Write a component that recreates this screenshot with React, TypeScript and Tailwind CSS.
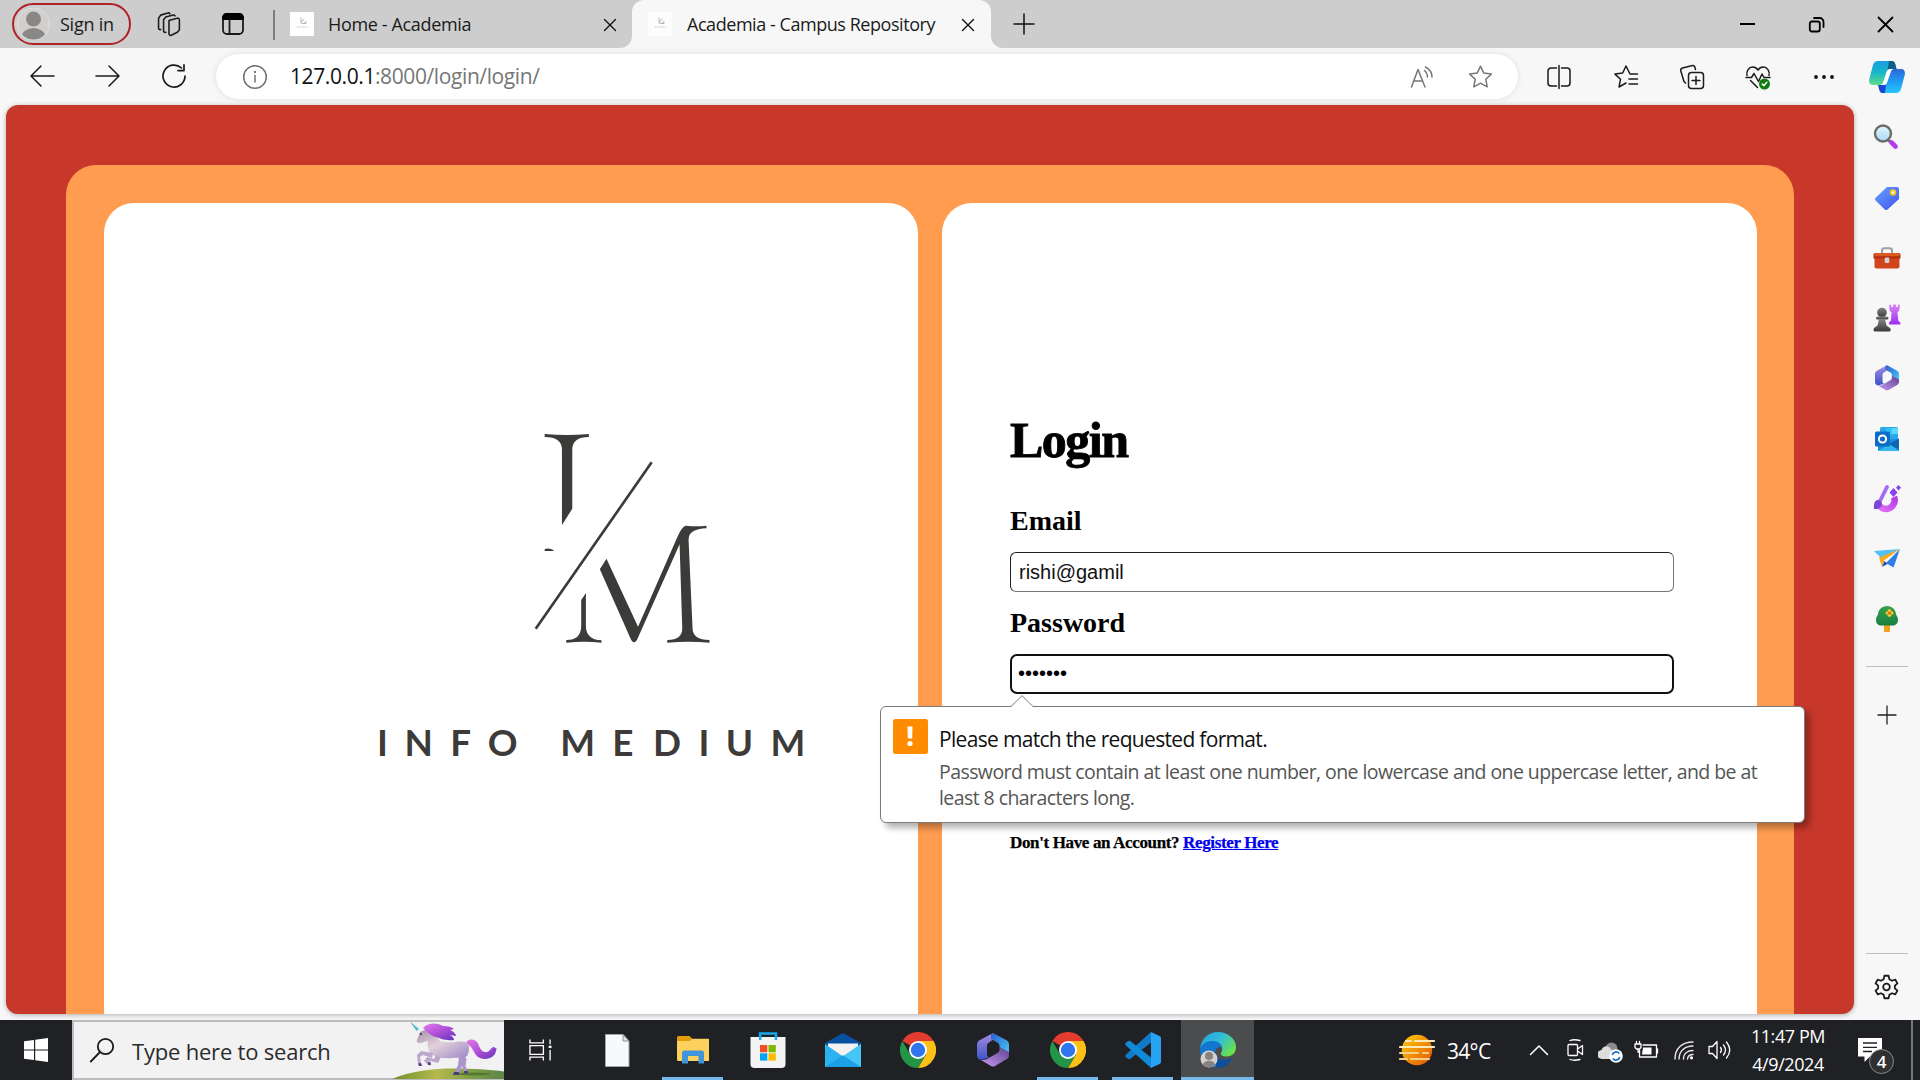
import React from 'react';

type IconProps = {
  w?: number;
  h?: number;
  vb?: string;
  stroke?: string;
  sw?: number;
  className?: string;
  children: React.ReactNode;
};

function Icon({ w = 24, h = 24, vb = '0 0 24 24', stroke = '#1b1b1b', sw = 1.5, className = '', children }: IconProps) {
  return (
    <svg
      width={w}
      height={h}
      viewBox={vb}
      fill="none"
      stroke={stroke}
      strokeWidth={sw}
      strokeLinecap="round"
      strokeLinejoin="round"
      className={`block shrink-0 overflow-visible ${className}`}
    >
      {children}
    </svg>
  );
}

function Slot({ className, children }: { className: string; children?: React.ReactNode }) {
  return <div className={`flex shrink-0 items-center justify-center ${className}`}>{children}</div>;
}

/* ---------- browser tab strip ---------- */

function Favicon({ bg }: { bg: string }) {
  return (
    <div className={`h-6 w-6 shrink-0 ${bg}`}>
      <Icon stroke="#b5b5b5" sw={1}>
        <path d="M11 6v4M11 11l3-4M12 11.500h4v-2l-2 2" />
        <path d="M7 15h11" stroke="#d4d4d4" strokeWidth={1.5} strokeDasharray="1.500 1" strokeLinecap="butt" />
      </Icon>
    </div>
  );
}

function CloseX({ size }: { size: number }) {
  return (
    <Icon w={size} h={size} vb="0 0 12 12" sw={1.4} stroke="#111">
      <path d="M.5.5l11 11M11.500.5l-11 11" />
    </Icon>
  );
}

function TabStrip() {
  return (
    <div className="flex h-12 w-full bg-[#cdcdcd]">
      <div className="ml-3 mt-[3px] flex h-[42px] w-[119px] shrink-0 items-center rounded-full border-2 border-[#ad2227] pl-[3px]">
        <svg width="33" height="34" viewBox="0 0 33 34" className="block">
          <defs>
            <clipPath id="avatar">
              <circle cx="16.500" cy="17" r="15.500" />
            </clipPath>
          </defs>
          <circle cx="16.500" cy="17" r="16" fill="#d2d0ce" stroke="#e2e0de" />
          <g clipPath="url(#avatar)" fill="#8a8886">
            <circle cx="16.500" cy="12" r="7.500" />
            <ellipse cx="16.500" cy="30" rx="12" ry="9" />
          </g>
        </svg>
        <span className="ml-[10px] text-[18px] tracking-[-0.25px] whitespace-nowrap text-[#1b1b1b]">Sign in</span>
      </div>
      <Slot className="ml-[26px] w-6">
        <Icon w={25} h={25}>
          <path d="M11.500 8.200l7.800-2.200a1.600 1.600 0 0 1 2.200 1.500v9.500l-2 2.500-5.800 2.800a1.500 1.500 0 0 1-2.200-1.400z" />
          <path d="M8.500 19.500A1.500 1.500 0 0 1 6.300 18V7.500l2-2.600 7.300-2a1.500 1.500 0 0 1 1.700.8" />
          <path d="M3.500 16.800A1.500 1.500 0 0 1 1.500 15.300V6l2-3 7-2a1.500 1.500 0 0 1 1.900.7" />
        </Icon>
      </Slot>
      <Slot className="ml-[41px] w-[22px]">
        <Icon w={22} h={22} vb="0 0 22 22" sw={1.800}>
          <rect x="1" y="1" width="20" height="20" rx="4" />
          <path d="M1 6V4.500A3.500 3.500 0 0 1 4.500 1h13A3.500 3.500 0 0 1 21 4.500V6z" fill="#000" stroke="#000" />
          <path d="M7.500 7v14" />
        </Icon>
      </Slot>
      <div className="ml-[29px] mt-[10px] h-[30px] w-[2px] bg-[#7d7d7d]" />
      <div className="ml-[15px] flex w-[342px] items-center">
        <Favicon bg="bg-white" />
        <span className="ml-[14px] flex-1 text-[18px] tracking-[-0.35px] whitespace-nowrap text-[#1b1b1b]">Home - Academia</span>
        <div className="mt-[2px] mr-[16px]">
          <CloseX size={12} />
        </div>
      </div>
      <div className="relative flex w-[359px] items-center rounded-t-[12px] bg-[#f7f7f7] pl-4">
        <svg width="12" height="12" viewBox="0 0 12 12" className="absolute bottom-0 -left-3" fill="#f7f7f7">
          <path d="M12 0v12H0A12 12 0 0 0 12 0z" />
        </svg>
        <svg width="12" height="12" viewBox="0 0 12 12" className="absolute -right-3 bottom-0" fill="#f7f7f7">
          <path d="M0 0v12h12A12 12 0 0 1 0 0z" />
        </svg>
        <Favicon bg="bg-[#fdfdfd]" />
        <span className="ml-[15px] flex-1 text-[18px] tracking-[-0.45px] whitespace-nowrap text-[#1b1b1b]">
          Academia - Campus Repository
        </span>
        <div className="mt-[2px] mr-[17px]">
          <CloseX size={12} />
        </div>
      </div>
      <Slot className="ml-[22px] w-[22px]">
        <Icon w={20} h={20} vb="0 0 20 20" sw={1.5} stroke="#111">
          <path d="M10 0v20M0 10h20" />
        </Icon>
      </Slot>
      <div className="flex-1" />
      <Slot className="w-[69px]">
        <Icon w={15} h={2} vb="0 0 15 2" sw={2} stroke="#000">
          <path d="M0 1h15" strokeLinecap="butt" />
        </Icon>
      </Slot>
      <Slot className="w-[69px]">
        <Icon w={15} h={15} vb="0 0 15 15" sw={1.800} stroke="#000">
          <rect x=".8" y="4.500" width="10" height="10" rx="2" />
          <path d="M5 1h5.500a4 4 0 0 1 4 4v5" />
        </Icon>
      </Slot>
      <Slot className="w-[69px]">
        <Icon w={15} h={15} vb="0 0 15 15" sw={1.800} stroke="#000">
          <path d="M.5.5l14 14M14.500.5l-14 14" />
        </Icon>
      </Slot>
    </div>
  );
}

/* ---------- address bar ---------- */

const STAR =
  'M12 1.200l3.300 6.900 7.500 1-5.500 5.200 1.400 7.500L12 18.200l-6.700 3.600 1.400-7.500L1.200 9.100l7.500-1z';

function CopilotLogo() {
  return (
    <svg width="36" height="32" viewBox="0 0 36 32" className="block">
      <defs>
        <linearGradient id="cpA" x1="0" y1="0" x2="0" y2="1">
          <stop offset="0" stopColor="#1b9de2" />
          <stop offset=".5" stopColor="#18b7c9" />
          <stop offset="1" stopColor="#62dd8a" />
        </linearGradient>
        <linearGradient id="cpB" x1="0" y1="0" x2="0" y2="1">
          <stop offset="0" stopColor="#2f68d8" />
          <stop offset=".6" stopColor="#1da3f5" />
          <stop offset="1" stopColor="#28c6f8" />
        </linearGradient>
      </defs>
      <path d="M9 0h14c2 0 3 2 3.500 4l1 4h-6c-2 0-3 1-3.600 3L14 22c-.6 1.500-1.500 2-3 2H4c-3.500 0-4.500-3-3.700-6L4 4c.8-2.500 2.500-4 5-4z" fill="url(#cpA)" />
      <path d="M20 0h3c2 0 3 2 3.500 4l1 4h-6c-1.500 0-2.500.5-3 2z" fill="#0c6087" />
      <path d="M27 32H14c-2 0-3-2-3.500-4l-1-4h5c2 0 3-1 3.600-3L22 10c.6-1.500 1.500-2 3-2h7c3.500 0 4.500 3 3.700 6L32 28c-.8 2.500-2.500 4-5 4z" fill="url(#cpB)" />
      <path d="M16 32h-3c-1.500 0-2.500-2-3-4l-1-4h6c1 0 1.500-.3 2-1z" fill="#1b48cf" />
      <path d="M17.700 10.500c.5-1.500 1.700-2.500 3.300-2.500h4c-1.500 0-2.500.8-3 2l-4.200 12c-.5 1.300-1.500 2-3.300 2h-3c1.300 0 2-.7 2.500-2z" fill="#fff" />
    </svg>
  );
}

function AddressBar() {
  return (
    <div className="flex h-[57px] w-full bg-[#f7f7f7] pl-[9px]">
      <Slot className="h-14 w-[66px]">
        <Icon w={24} h={22} vb="0 0 24 22">
          <path d="M24 11H1M11 1L1 11l10 10" />
        </Icon>
      </Slot>
      <Slot className="h-14 w-[66px]">
        <Icon w={24} h={22} vb="0 0 24 22">
          <path d="M0 11h23M13 1l10 10-10 10" />
        </Icon>
      </Slot>
      <Slot className="h-14 w-[66px]">
        <Icon w={24} h={24} sw={1.700}>
          <path d="M23 12a11 11 0 1 1-3.500-8M22 .8v5.800h-6" />
        </Icon>
      </Slot>
      <div className="mt-[6px] ml-[9px] flex h-[45px] w-[1302px] items-center rounded-full bg-white pl-[27px] shadow-[0_0_6px_rgba(0,0,0,0.1)]">
        <Icon stroke="#717171" sw={1.5}>
          <circle cx="12" cy="12" r="11.300" />
          <path d="M12 10.500V17" />
          <path d="M12 6.800v.4" strokeWidth={2} />
        </Icon>
        <span className="ml-[23px] flex-1 pt-px text-[21px] tracking-[-0.4px] whitespace-nowrap text-[#767676]">
          <span className="text-[#111]">127.0.0.1</span>:8000/login/login/
        </span>
        <Slot className="w-[59px]">
          <Icon w={24} h={22} vb="0 0 24 22" stroke="#767676">
            <path d="M1.500 21L8 3.500 15 21M4 15h8.500" />
            <path d="M14.500 4.500q3 2.500 3 6.500M15.500 1q6.500 3.500 6.500 10" strokeWidth={1.500} />
          </Icon>
        </Slot>
        <Slot className="mr-2 w-[59px]">
          <Icon w={25} h={24} stroke="#767676">
            <path d={STAR} />
          </Icon>
        </Slot>
      </div>
      <Slot className="ml-2 h-[57px] w-[66px]">
        <Icon>
          <path d="M9.500 3H4a3 3 0 0 0-3 3v12a3 3 0 0 0 3 3h5.500M14.500 3H20a3 3 0 0 1 3 3v12a3 3 0 0 1-3 3h-5.500M12 .5v23" />
        </Icon>
      </Slot>
      <Slot className="ml-px h-[57px] w-[66px]">
        <Icon>
          <path d="M23.500 9H16l-4-8-3.300 7L1 9.100l5.500 5.200L5 22l7-4M15 14h8.500M15 19h8.500" />
        </Icon>
      </Slot>
      <Slot className="h-[57px] w-[66px]">
        <Icon>
          <rect x="8.500" y="7.500" width="15" height="16" rx="3" />
          <path d="M16 11.500v8M12 15.500h8" />
          <path d="M5.500 18L4 16.500.800 6A2.500 2.500 0 0 1 2.500 3L11.500.700A2.500 2.500 0 0 1 15 2.500L15.500 4.500" />
        </Icon>
      </Slot>
      <Slot className="h-[57px] w-[66px]">
        <Icon w={24} h={24}>
          <path d="M1 10.500C0 6 3 2 6.500 2 9 2 11 3.300 12 5c1-1.700 3-3 5.500-3C21 2 24 6 23 10.500" />
          <path d="M0 12.500h5.500L8 8.500l4.500 8L16 9l2 3.500h6M4.500 15.500l7 7" />
          <circle cx="18.500" cy="19" r="5.500" fill="#107c10" stroke="none" />
          <path d="M16.300 19l1.500 1.700 3-3.400" stroke="#fff" />
        </Icon>
      </Slot>
      <Slot className="h-[57px] w-[66px]">
        <Icon w={20} h={4} vb="0 0 20 4" stroke="none">
          <g fill="#111">
            <circle cx="2" cy="2" r="1.900" />
            <circle cx="10" cy="2" r="1.900" />
            <circle cx="18" cy="2" r="1.900" />
          </g>
        </Icon>
      </Slot>
      <Slot className="h-[57px] w-[60px]">
        <CopilotLogo />
      </Slot>
    </div>
  );
}

/* ---------- right sidebar ---------- */

function M365({ w, h }: { w: number; h: number }) {
  return (
    <svg width={w} height={h} viewBox="0 0 32 34" className="block">
      <defs>
        <linearGradient id="mA" x1="0" y1="0" x2="0" y2="1">
          <stop offset="0" stopColor="#a88be0" />
          <stop offset="1" stopColor="#3a55c4" />
        </linearGradient>
        <linearGradient id="mB" x1="0" y1="0" x2="1" y2="1">
          <stop offset="0" stopColor="#2b5fd0" />
          <stop offset="1" stopColor="#4cc8f5" />
        </linearGradient>
        <linearGradient id="mC" x1="0" y1="1" x2="1" y2="0">
          <stop offset="0" stopColor="#c99bf5" />
          <stop offset="1" stopColor="#5c3f8f" />
        </linearGradient>
      </defs>
      <path d="M16 0L3 7C1 8 0 9.500 0 12v10c0 3 1.500 4.500 4 5l8-2.500c-2-1-2-2.500-2-4V13c0-1.500.5-2.500 2-3.500l7-5z" fill="url(#mA)" />
      <path d="M14 1c1.500-.8 2.500-.8 4 0l11 6c2 1 3 2.500 3 5v9l-9.500-7V13c0-1.500-.6-2.500-2-3.500L14 6z" fill="url(#mB)" />
      <path d="M32 19v3c0 2-1 3.500-3 4.500L18 33c-1.500.8-2.500.8-4 0L4 27c2 .3 4 0 6-1l10.500-6c1.500-1 2-2 2-4v-2z" fill="url(#mC)" />
    </svg>
  );
}

function SearchGlass() {
  return (
    <svg width="26" height="26" viewBox="0 0 26 26" className="mb-[2px] mr-px block">
      <defs>
        <linearGradient id="sgL" x1="0" y1="0" x2="0" y2="1">
          <stop offset="0" stopColor="#e4f6fd" />
          <stop offset="1" stopColor="#a9d9f4" />
        </linearGradient>
      </defs>
      <path d="M14.500 15.500l3 2.500" stroke="#777" strokeWidth="3" />
      <path d="M18.500 18.500l4 4" stroke="#b53bf0" strokeWidth="4.600" strokeLinecap="round" />
      <circle cx="10" cy="9.500" r="8" fill="url(#sgL)" stroke="#6b6d68" strokeWidth="2.400" />
    </svg>
  );
}

function Tag() {
  return (
    <svg width="24" height="24" viewBox="0 0 24 24" className="block">
      <defs>
        <linearGradient id="tg" x1="0" y1="0" x2="1" y2="1">
          <stop offset="0" stopColor="#63a4fd" />
          <stop offset="1" stopColor="#4152ee" />
        </linearGradient>
      </defs>
      <path d="M12 1h10a2 2 0 0 1 2 2v10L12.500 23.500a2 2 0 0 1-2.800 0L.6 14.600a2 2 0 0 1 0-2.800z" fill="url(#tg)" />
      <circle cx="18" cy="6.500" r="2.300" fill="#fff" stroke="#f7c51e" strokeWidth="2" />
    </svg>
  );
}

function Toolbox() {
  return (
    <svg width="28" height="22" viewBox="0 0 28 22" className="block">
      <path d="M9 6V3.500C9 2 10 1.200 11.500 1.200h5c1.500 0 2.500.8 2.500 2.300V6" fill="none" stroke="#a09ea3" strokeWidth="2" />
      <rect x="1.500" y="10" width="25" height="11.500" rx="2" fill="#d0451b" />
      <rect x=".5" y="6" width="27" height="6" rx="1.500" fill="#b83614" />
      <rect x="1.500" y="6" width="25" height="3" rx="1" fill="#da5a22" />
      <rect x="11.700" y="10.500" width="4.600" height="5.500" rx="1.200" fill="#d0d0d5" />
    </svg>
  );
}

function Chess() {
  return (
    <svg width="28" height="28" viewBox="0 0 28 28" className="block">
      <defs>
        <linearGradient id="ck" x1="0" y1="0" x2="0" y2="1">
          <stop offset="0" stopColor="#d887f5" />
          <stop offset="1" stopColor="#a02af0" />
        </linearGradient>
        <linearGradient id="cp" x1="0" y1="0" x2="0" y2="1">
          <stop offset="0" stopColor="#858585" />
          <stop offset="1" stopColor="#3a3a3a" />
        </linearGradient>
      </defs>
      <path d="M16 .8h2.200V3h1.800V.5h3V3h1.800V.8H27l-.8 5.700-1.700 2 .8 8 2 2.200v1.800H16v-2l2-2 .5-8-1.800-2z" fill="url(#ck)" />
      <g fill="url(#cp)">
        <circle cx="9" cy="8.500" r="4.800" />
        <rect x="3" y="12.500" width="12.500" height="3" rx="1.500" />
        <path d="M6 15h6l1.500 6.500 3.500 2.500c1.500 2 .5 3.500-1 3.500H2C.5 27.500 0 25.500 1 24l3.500-2.500z" />
      </g>
    </svg>
  );
}

function Outlook() {
  return (
    <svg width="24" height="24" viewBox="0 0 24 24" className="block">
      <rect x="5" y="0" width="18" height="13" rx="1.500" fill="#2aa7ec" />
      <rect x="11" y="1" width="6" height="7" fill="#33c3f3" />
      <rect x="17" y="1" width="6" height="6" fill="#5ad8fa" />
      <path d="M3 12h21v10.500a1.500 1.500 0 0 1-1.500 1.500H4.500A1.500 1.500 0 0 1 3 22.500z" fill="#1a8fdf" />
      <path d="M24 11.500v11L14 17z" fill="#0f66b0" />
      <path d="M3 24l11-7 10 7z" fill="#32b8ee" />
      <rect x="0" y="4.500" width="15" height="15" rx="1.500" fill="#0b6cc7" />
      <circle cx="7.500" cy="12" r="3.600" fill="none" stroke="#fff" strokeWidth="2" />
    </svg>
  );
}

function Designer() {
  return (
    <svg width="28" height="28" viewBox="0 0 28 28" className="block">
      <defs>
        <linearGradient id="dz" x1="0" y1="1" x2="1" y2="0">
          <stop offset="0" stopColor="#e070f5" />
          <stop offset="1" stopColor="#b23be8" />
        </linearGradient>
      </defs>
      <path d="M5 18.500a8.500 8.500 0 1 0 16-6.500" fill="none" stroke="url(#dz)" strokeWidth="6.500" />
      <path d="M14 2L6.500 17" stroke="#a36cf3" strokeWidth="3.800" strokeLinecap="round" />
      <path d="M1 24c-.5-5 .5-9 4-9 3 0 4.500 2.500 3.500 5.500C7.500 23.500 4 24.500 1 24z" fill="#7a46d8" />
      <path d="M20.500 3l4 4.500-4 4.500-4-4.500zM25.500 0l2.500 2.800-2.500 2.700L23 2.800z" fill="#8645ea" />
    </svg>
  );
}

function PaperPlane() {
  return (
    <svg width="26" height="20" viewBox="0 0 26 20" className="block">
      <path d="M0 2L26 0 7 9z" fill="#55c0f6" />
      <path d="M26 0L19.500 18.500 11 13.500 9 17z" fill="#2f7ee8" />
      <path d="M26 0L5 8.500 8 18l2.500-7z" fill="#f2ac24" />
      <path d="M8 18l2.500-6 3 3z" fill="#1b4fb8" />
    </svg>
  );
}

function Tree() {
  return (
    <svg width="22" height="26" viewBox="0 0 22 26" className="block">
      <defs>
        <linearGradient id="tr" x1="0" y1="0" x2="0" y2="1">
          <stop offset="0" stopColor="#38a04f" />
          <stop offset="1" stopColor="#17803f" />
        </linearGradient>
      </defs>
      <rect x="8" y="17" width="6" height="9" rx="1" fill="#f0a21c" />
      <path d="M11 0c5 0 9 4 9 8.500 1.200 1.500 2 3.300 2 5.500 0 3-2 5.500-5 5.500H5c-3 0-5-2.500-5-5.500 0-2.200.8-4 2-5.500C2 4 6 0 11 0z" fill="url(#tr)" />
      <g fill="#f8c828">
        <circle cx="13.500" cy="4.700" r="1.700" />
        <circle cx="13.500" cy="9.300" r="1.700" />
        <circle cx="11.200" cy="7" r="1.700" />
        <circle cx="15.800" cy="7" r="1.700" />
      </g>
      <circle cx="13.500" cy="7" r="1.500" fill="#e06a1a" />
    </svg>
  );
}

function Sidebar() {
  const items = [
    <SearchGlass />,
    <Tag />,
    <Toolbox />,
    <Chess />,
    <M365 w={24} h={26} />,
    <Outlook />,
    <Designer />,
    <PaperPlane />,
    <Tree />,
  ];
  return (
    <div className="flex w-[65px] shrink-0 flex-col items-center bg-[#f7f7f7] pt-[3px]">
      {items.map((it, i) => (
        <Slot key={i} className="h-[60.1px] w-full">
          {it}
        </Slot>
      ))}
      <div className="mt-[17px] h-px w-[42px] bg-[#bdbdbd]" />
      <Slot className="mt-[36px] h-6">
        <Icon w={18} h={18} vb="0 0 18 18" sw={1.3} stroke="#222">
          <path d="M9 0v18M0 9h18" />
        </Icon>
      </Slot>
      <div className="flex-1" />
      <div className="h-px w-[42px] bg-[#bdbdbd]" />
      <Slot className="mt-[20px] mb-[20px] h-[26px]">
        <Icon w={25} h={26} sw={1.700} vb="0 0 24 24">
          <circle cx="12" cy="12" r="3.200" />
          <path d="M10 1.200h4l.7 3.300 2.600 1.500 3.200-1 2 3.500-2.500 2.200v2.600l2.500 2.200-2 3.500-3.200-1-2.600 1.500-.7 3.300h-4l-.7-3.300L6.700 18l-3.200 1-2-3.500L4 13.300v-2.600L1.500 8.500l2-3.500 3.200 1 2.600-1.500z" />
        </Icon>
      </Slot>
    </div>
  );
}

/* ---------- web page ---------- */

function BrandLogo() {
  return (
    <svg width="521" height="370" viewBox="0 0 1568 1110" preserveAspectRatio="none" className="block" fill="#3c3b39">
      <path d="M613 72q67 6 133 0v9q-50 0-50 38V296l-31 49V119q0-38-52-38z" />
      <path d="M613 417q14-5 27 4v2h-27z" />
      <path d="M935 157L586 656" stroke="#3c3b39" strokeWidth="8" fill="none" />
      <path d="M737 549v98q0 42 47 44v7q-52-5-106 0v-8q45 0 45-43v-77z" />
      <path d="M799 446l95 204 118-268q14-34 27-35 30 3 61 0v8q-55 2-54 35l12 264q0 36 51 36v8q-62-5-127 0v-8q46 0 45-36l-8-251-128 286q-9 15-18 0L779 478z" />
      <text
        y="1038"
        x="108 191 329 442 600 660 816 939 1076 1158 1293"
        fontFamily="Lato, sans-serif"
        fontWeight="700"
        fontSize="111"
      >
        INFO MEDIUM
      </text>
    </svg>
  );
}

function ValidationBubble() {
  return (
    <div className="absolute top-[601px] left-[874px] flex h-[117px] w-[925px] rounded-[6px] border border-[#7b7b7b] bg-white shadow-[5px_5px_6px_rgba(0,0,0,0.3)]">
      <svg width="24" height="13" viewBox="0 0 24 13" className="absolute -top-[12px] left-[129px] block">
        <path d="M0 13L1 11.500 12 .700l11 10.800 1 1.500z" fill="#fff" />
        <path d="M.5 12L12 .700 23.500 12" fill="none" stroke="#7b7b7b" />
      </svg>
      <svg width="35" height="35" viewBox="0 0 35 35" className="mt-[12px] ml-[12px] block shrink-0">
        <rect width="35" height="35" rx="2.500" fill="#ff8c00" />
        <path d="M14.500 7.500h5l-.3 12h-4.400z" fill="#fff" />
        <circle cx="17" cy="24.500" r="2.600" fill="#fff" />
      </svg>
      <div className="mt-[18px] ml-[11px] whitespace-nowrap">
        <div className="text-[21px] leading-7 tracking-[-0.68px] text-[#111]">Please match the requested format.</div>
        <div className="mt-[6px] text-[19.5px] leading-[26px] tracking-[-0.57px] text-[#555]">
          Password must contain at least one number, one lowercase and one uppercase letter, and be at
          <br />
          least 8 characters long.
        </div>
      </div>
    </div>
  );
}

function LoginPage() {
  return (
    <div className="relative ml-[6px] h-[909px] w-[1848px] shrink-0 overflow-hidden rounded-[12px] bg-[#c7382b] shadow-[0_1px_5px_rgba(0,0,0,0.3)]">
      <div className="mx-[60px] mt-[60px] flex h-[1000px] gap-6 rounded-[30px] bg-[#ff9c50] py-[38px] pl-[38px]">
        <div className="w-[814px] shrink-0 rounded-[30px] bg-white pt-[207px] pl-[237px]">
          <BrandLogo />
        </div>
        <div className="w-[815px] shrink-0 rounded-[30px] bg-white pt-[207px] pl-[68px] font-['Liberation_Serif',serif] text-black">
          <h1 className="text-[50px] leading-[60px] font-bold tracking-[-1.5px] [-webkit-text-stroke:0.9px_#000]">Login</h1>
          <div className="mt-[35px] text-[28px] leading-8 font-bold">Email</div>
          <div className="mt-[15px] flex h-10 w-[664px] items-center rounded-[6px] border border-[#767676] border-t-[#222] border-l-[#222] pl-2 font-['Liberation_Sans',sans-serif] text-[20px] text-[#111]">
            rishi@gamil
          </div>
          <div className="mt-[15px] text-[28px] leading-8 font-bold">Password</div>
          <div className="mt-[15px] flex h-10 w-[664px] items-center rounded-[7px] border-[2.5px] border-[#101010] pb-[2px] pl-[6px] font-['Liberation_Sans',sans-serif] text-[20px] text-black">
            •••••••
          </div>
          <div className="mt-[139px] text-[17px] leading-5 font-bold tracking-[-0.36px] whitespace-nowrap [-webkit-text-stroke:0.25px]">
            Don't Have an Account? <span className="text-[#0000ee] underline">Register Here</span>
          </div>
        </div>
      </div>
      <ValidationBubble />
    </div>
  );
}

/* ---------- taskbar ---------- */

function Unicorn() {
  return (
    <svg width="112" height="58" viewBox="0 0 112 58" className="block">
      <defs>
        <linearGradient id="uh" x1="0" y1="0" x2="1" y2="1">
          <stop offset="0" stopColor="#a68fae" />
          <stop offset=".45" stopColor="#e2d0da" />
          <stop offset="1" stopColor="#9c88c6" />
        </linearGradient>
        <linearGradient id="um" x1="0" y1="0" x2="1" y2="1">
          <stop offset="0" stopColor="#e07bea" />
          <stop offset=".5" stopColor="#b04fd8" />
          <stop offset="1" stopColor="#5f35b8" />
        </linearGradient>
        <linearGradient id="ug" x1="0" y1="0" x2="1" y2="0">
          <stop offset="0" stopColor="#6f8f2e" />
          <stop offset=".4" stopColor="#b6b94e" />
          <stop offset=".7" stopColor="#7da044" />
          <stop offset="1" stopColor="#5d8547" />
        </linearGradient>
      </defs>
      <path d="M0 58C18 50 42 47.500 60 47.500c20 0 38 1 52 3V58z" fill="url(#ug)" />
      <ellipse cx="80" cy="53" rx="18" ry="1.500" fill="#3f5f25" opacity=".6" />
      <path d="M18 .500L27 8l-2.500 2z" fill="#58b9cc" />
      <path d="M75 20c6-3 10-1 12 5 2 5 6 8 10 5 2-2 3-4 5-4l3 2-1 1c0 7-9 11-16 8-7-3-6-11-13-14z" fill="url(#um)" />
      <path d="M71 33l3.500 5-1 7 2.500 6h-4l-2-6-3 8h-5l4-9 1-8-2-4z" fill="#ab95cc" />
      <path d="M33 9c6 1 11 5 15 11 8 3 19-1 26 1 4 2 4 9 1 14-5 3-9 1-14 2-9 1-17-1-22-4-3-3-4-8-3-13l-7 2c-3 1-5-1-4-3l3-8z" fill="url(#uh)" />
      <path d="M41 32l-12-2-4 4 1 9 3-1-1-6 3-2 9 3zM44 34l-2 4-7-2-3 4 4 4 4 0-3-3 1-1 8 2 3-6z" fill="#bca8cc" />
      <path d="M31 7c6-6 15-5 20-2 5 0 9 1 11 3l-4 1c3 1 6 4 6 6l-6-1c2 1 4 3 4 5-10 1-14-2-18-3-5-1-9-5-13-9z" fill="url(#um)" />
      <path d="M62 51h5v3h-6zM72 50h4v2.500h-4zM26 42.500l3-.5 1 3h-3zM36 41l3 .5-1 3-2-1z" fill="#4b3a7c" />
      <circle cx="29" cy="13" r=".9" fill="#2b1b3f" />
    </svg>
  );
}

function Chrome() {
  return (
    <svg width="36" height="36" viewBox="0 0 36 36" className="block">
      <path d="M18 18L2.400 9A18 18 0 0 1 33.600 9H18z" fill="#e33b2e" />
      <path d="M18 18V9h15.600A18 18 0 0 1 18 36l7.800-13.500z" fill="#fcc016" />
      <path d="M18 18l7.800 4.500L18 36A18 18 0 0 1 2.400 9l7.800 13.500z" fill="#249446" />
      <circle cx="18" cy="18" r="9" fill="#fff" />
      <circle cx="18" cy="18" r="7.200" fill="#2f76ee" />
    </svg>
  );
}

function FileIcon() {
  return (
    <svg width="25" height="33" viewBox="0 0 25 33" className="block">
      <path d="M.5.500h17.500l6 6.500v25.500H.5z" fill="#f7f9fa" stroke="#a5a5a5" />
      <path d="M18 .500V7h6z" fill="#dfe2e4" stroke="#8f8f8f" />
    </svg>
  );
}

function FolderIcon() {
  return (
    <svg width="32" height="28" viewBox="0 0 32 28" className="block">
      <path d="M0 1.500A1.500 1.500 0 0 1 1.500 0h11L15 2.500V7H0z" fill="#e29c06" />
      <path d="M0 5h13l2-2.200h17V25H1.500A1.500 1.500 0 0 1 0 23.500z" fill="#fcd05c" />
      <path d="M5 27.500V17a2.500 2.500 0 0 1 2.500-2.500h17A2.500 2.500 0 0 1 27 17v10.500h-5.500v-7.500H11v7.500z" fill="#3f94dc" />
    </svg>
  );
}

function StoreIcon() {
  return (
    <svg width="36" height="36" viewBox="0 0 36 36" className="block">
      <path d="M10 8V1.500h16V8" fill="none" stroke="#19a7ee" strokeWidth="2.400" />
      <path d="M.5 5h35v27a4 4 0 0 1-4 4h-27a4 4 0 0 1-4-4z" fill="#f4f4f4" />
      <path d="M9 4h2.400v4H9zM24.700 4h2.400v4h-2.400z" fill="#19a7ee" />
      <path d="M10 13h7.300v7.300H10z" fill="#f25022" />
      <path d="M18.500 13h7.300v7.300h-7.300z" fill="#7fba00" />
      <path d="M10 21.300h7.300v7.300H10z" fill="#00a4ef" />
      <path d="M18.500 21.300h7.300v7.300h-7.300z" fill="#ffb900" />
    </svg>
  );
}

function MailIcon() {
  return (
    <svg width="36" height="34" viewBox="0 0 36 34" className="block">
      <path d="M0 10L18 0l18 10v4H0z" fill="#0a50a0" />
      <path d="M3 10.500h30V20L18 28 3 20z" fill="#f2f2f2" />
      <path d="M0 11l18 12.500L36 11v23H0z" fill="#2ab3ef" />
      <path d="M18 23.500L36 11v23z" fill="#45c6f6" />
      <path d="M0 34h36L18 22z" fill="#1592dd" opacity=".6" />
    </svg>
  );
}

function CodeIcon() {
  return (
    <svg width="36" height="36" viewBox="0 0 36 36" className="block">
      <path d="M26 0v10.500L4.500 27.500 1 25.500C0 25 0 23.500 1 22.500z" fill="#0f7bc8" />
      <path d="M26 36V25.500L4.500 8.500 1 10.500c-1 .6-1 2 0 3z" fill="#1089d8" />
      <path d="M26 0l8.500 4A2.500 2.500 0 0 1 36 6v24a2.500 2.500 0 0 1-1.500 2L26 36z" fill="#27a3f2" />
    </svg>
  );
}

function EdgeIcon() {
  return (
    <svg width="36" height="36" viewBox="0 0 36 36" className="block">
      <defs>
        <linearGradient id="eg" x1="0" y1="0" x2="1" y2=".6">
          <stop offset="0" stopColor="#1f9fdf" />
          <stop offset=".55" stopColor="#33bfd6" />
          <stop offset="1" stopColor="#6ae04e" />
        </linearGradient>
      </defs>
      <path d="M0 17C1 7 8 0 18 0s18 7 18 15c0 6-4 9.500-9 9.500-4.500 0-7-1.500-6-3.500 3-4 .5-11-7-11C7 10 2 13 0 17z" fill="url(#eg)" />
      <path d="M0 17C2 11 8 8.500 14 9c5 .5 8 3.500 8 7-2-2-6-1-7 4-1 4 0 7 2 9 2 3-1 7-3 6C6 34 0 28 0 17z" fill="#1477cf" />
      <path d="M15 19c-1.500 8 8 11 17.500 7-3 6-8 10-14.500 10-4-3-6-12-3-17z" fill="#0d4f9c" />
      <circle cx="9" cy="27" r="8.500" fill="#d2d0ce" />
      <circle cx="9" cy="24" r="4" fill="#85827f" />
      <path d="M3 32.500c1-5 11-5 12 0-3 3.500-9 3.500-12 0z" fill="#85827f" />
    </svg>
  );
}

function TaskItem({ children, open, active }: { children: React.ReactNode; open?: boolean; active?: boolean }) {
  return (
    <div className="flex h-[60px] w-[75px] shrink-0 justify-center">
      <div className={active ? 'flex w-[73px] flex-col items-center bg-[#4b4c4e]' : 'flex w-[61px] flex-col items-center'}>
        <div className="flex h-[57px] items-center pt-[3px]">{children}</div>
        <div className={open || active ? 'h-[3px] w-full bg-[#76b9ed]' : 'h-[3px]'} />
      </div>
    </div>
  );
}

function Tray() {
  return (
    <div className="flex flex-1 items-center">
      <svg width="36" height="32" viewBox="0 0 36 32" className="ml-[144px] block shrink-0">
        <defs>
          <linearGradient id="sun" x1="0" y1="0" x2="1" y2="1">
            <stop offset="0" stopColor="#ffce08" />
            <stop offset="1" stopColor="#e25306" />
          </linearGradient>
        </defs>
        <circle cx="18" cy="16" r="15.200" fill="url(#sun)" />
        <g stroke="#fbe9b8" strokeWidth="2.200" strokeLinecap="round">
          <path d="M7 7h5M16 7h19M1 13h34" />
          <path d="M1 19h18M24 19h5M1 25h7M12 25h18" stroke="#f5d08b" />
        </g>
      </svg>
      <span className="ml-[12px] w-[73px] pt-[3px] text-[21px] tracking-[-0.7px] text-white">34°C</span>
      <Slot className="w-[37px]">
        <Icon w={18} h={10} vb="0 0 18 10" stroke="#fff" sw={1.5}>
          <path d="M.5 9.500L9 1l8.500 8.500" />
        </Icon>
      </Slot>
      <Slot className="w-[37px]">
        <Icon w={17} h={22} vb="0 0 17 22" stroke="#fff" sw={1.3}>
          <rect x="1" y="5.500" width="9.500" height="11" rx="1" />
          <path d="M10.500 10l5-3.500v9l-5-3.500M3 1.500q4-1.500 10 0M3 20.500q4 1.500 10 0" />
        </Icon>
      </Slot>
      <Slot className="w-[33px]">
        <svg width="25" height="21" viewBox="0 0 25 21" className="mt-[4px] block">
          <circle cx="13.500" cy="6.500" r="6" fill="#8b8b8b" />
          <path d="M4 17a4.500 4.500 0 0 1-.5-9C5 3 12 3 13 8c4-1 7 2 6 9z" fill="#dcdcdc" />
          <circle cx="18" cy="14" r="6.800" fill="#fff" />
          <path d="M14.200 13a4 4 0 0 1 7-1.500M21.800 15a4 4 0 0 1-7 1.500" fill="none" stroke="#1473c8" strokeWidth="1.700" />
        </svg>
      </Slot>
      <Slot className="w-[39px]">
        <Icon w={25} h={18} vb="0 0 25 18" stroke="#fff" sw={1.3}>
          <path d="M9 4h13.500v12H5.500V9" />
          <path d="M23.500 8v4" />
          <path d="M9 6.500h8.500v7H8z" fill="#fff" stroke="none" />
          <path d="M1 3h6v3.500L5.500 8h-3L1 6.500zM2.500.500V3M5.500.500V3M4 8v3h1.500" />
        </Icon>
      </Slot>
      <Slot className="w-[36px]">
        <Icon w={20} h={20} vb="0 0 20 20" stroke="#e8e8e8" sw={1.400}>
          <path d="M1 19C1 8.500 8 2 19 2M5 19C5 11 11 6 19 6M9.500 19c0-5.500 4-8.500 9.500-8.500" />
          <path d="M13.500 19q.500-4.500 5.500-4.500" />
          <circle cx="17.500" cy="17.800" r="1.600" fill="#fff" stroke="none" />
        </Icon>
      </Slot>
      <Slot className="w-[34px]">
        <Icon w={23} h={20} vb="0 0 23 20" stroke="#fff" sw={1.3}>
          <path d="M1 6.500h3.500L9 1.500v17l-4.500-5H1z" />
          <path d="M12.500 7.500q2 2.500 0 5M15.500 5q4 5 0 10M18.500 2q6.500 8 0 16" />
        </Icon>
      </Slot>
      <div className="ml-[14px] w-[76px] text-center text-[18px] leading-[28px] tracking-[-0.42px] whitespace-nowrap text-white">
        11:47 PM
        <br />
        4/9/2024
      </div>
      <div className="relative ml-[32px] h-[32px] w-[40px] shrink-0">
        <svg width="25" height="24" viewBox="0 0 25 24" className="mt-[4px] block">
          <path d="M0 0h24v18.500H12L6.500 24v-5.500H0z" fill="#fff" />
          <path d="M5 5h14M5 9.300h14M5 13.500h9" stroke="#202124" strokeWidth="1.300" />
        </svg>
        <div className="absolute top-[15px] left-[11px] flex h-[25px] w-[25px] items-center justify-center rounded-full border border-[#8b8b8b] bg-[#2f3032] text-[17px] leading-none font-semibold text-white">
          4
        </div>
      </div>
      <div className="ml-auto mr-[7px] h-[60px] w-[2px] bg-[#77787a]" />
    </div>
  );
}

function Taskbar() {
  return (
    <div className="flex h-[60px] w-full bg-[#202124]">
      <Slot className="w-[72px]">
        <svg width="24" height="24" viewBox="0 0 24 24" className="block" fill="#fff">
          <path d="M0 3.300L10 1.900v9.500H0zM11.200 1.700L24 0v11.400H11.200zM0 12.600h10V22L0 20.700zM11.200 12.600H24V24l-12.800-1.800z" />
        </svg>
      </Slot>
      <div className="flex w-[432px] shrink-0 items-center border-2 border-r-0 border-[#bcbcbc] bg-[#f2f2f2] pl-4">
        <Icon w={24} h={24} sw={1.800}>
          <circle cx="15.500" cy="8.500" r="7.700" />
          <path d="M10 14L.8 23.500" />
        </Icon>
        <span className="ml-[18px] flex-1 pt-[3px] text-[22px] tracking-[-0.2px] whitespace-nowrap text-[#2b2b2b]">
          Type here to search
        </span>
        <Unicorn />
      </div>
      <Slot className="w-[76px] pr-[4px]">
        <Icon w={23} h={24} stroke="#fff" sw={1.400}>
          <path d="M1 1v3.500h14V1M1 23v-3.500h14V23M1 7.500h14v9H1zM22 1v5M22 12v11" strokeLinecap="butt" strokeLinejoin="miter" />
          <path d="M20.500 7.500h3V10h-3z" fill="#fff" stroke="none" />
        </Icon>
      </Slot>
      <TaskItem>
        <FileIcon />
      </TaskItem>
      <TaskItem open>
        <FolderIcon />
      </TaskItem>
      <TaskItem>
        <StoreIcon />
      </TaskItem>
      <TaskItem>
        <MailIcon />
      </TaskItem>
      <TaskItem>
        <Chrome />
      </TaskItem>
      <TaskItem>
        <M365 w={32} h={34} />
      </TaskItem>
      <TaskItem open>
        <Chrome />
      </TaskItem>
      <TaskItem open>
        <CodeIcon />
      </TaskItem>
      <TaskItem active>
        <EdgeIcon />
      </TaskItem>
      <Tray />
    </div>
  );
}

export default function App() {
  return (
    <div className="flex h-[1080px] w-[1920px] flex-col overflow-hidden bg-[#f7f7f7] font-['Open_Sans',sans-serif]">
      <TabStrip />
      <AddressBar />
      <div className="flex h-[915px]">
        <LoginPage />
        <Sidebar />
      </div>
      <Taskbar />
    </div>
  );
}
